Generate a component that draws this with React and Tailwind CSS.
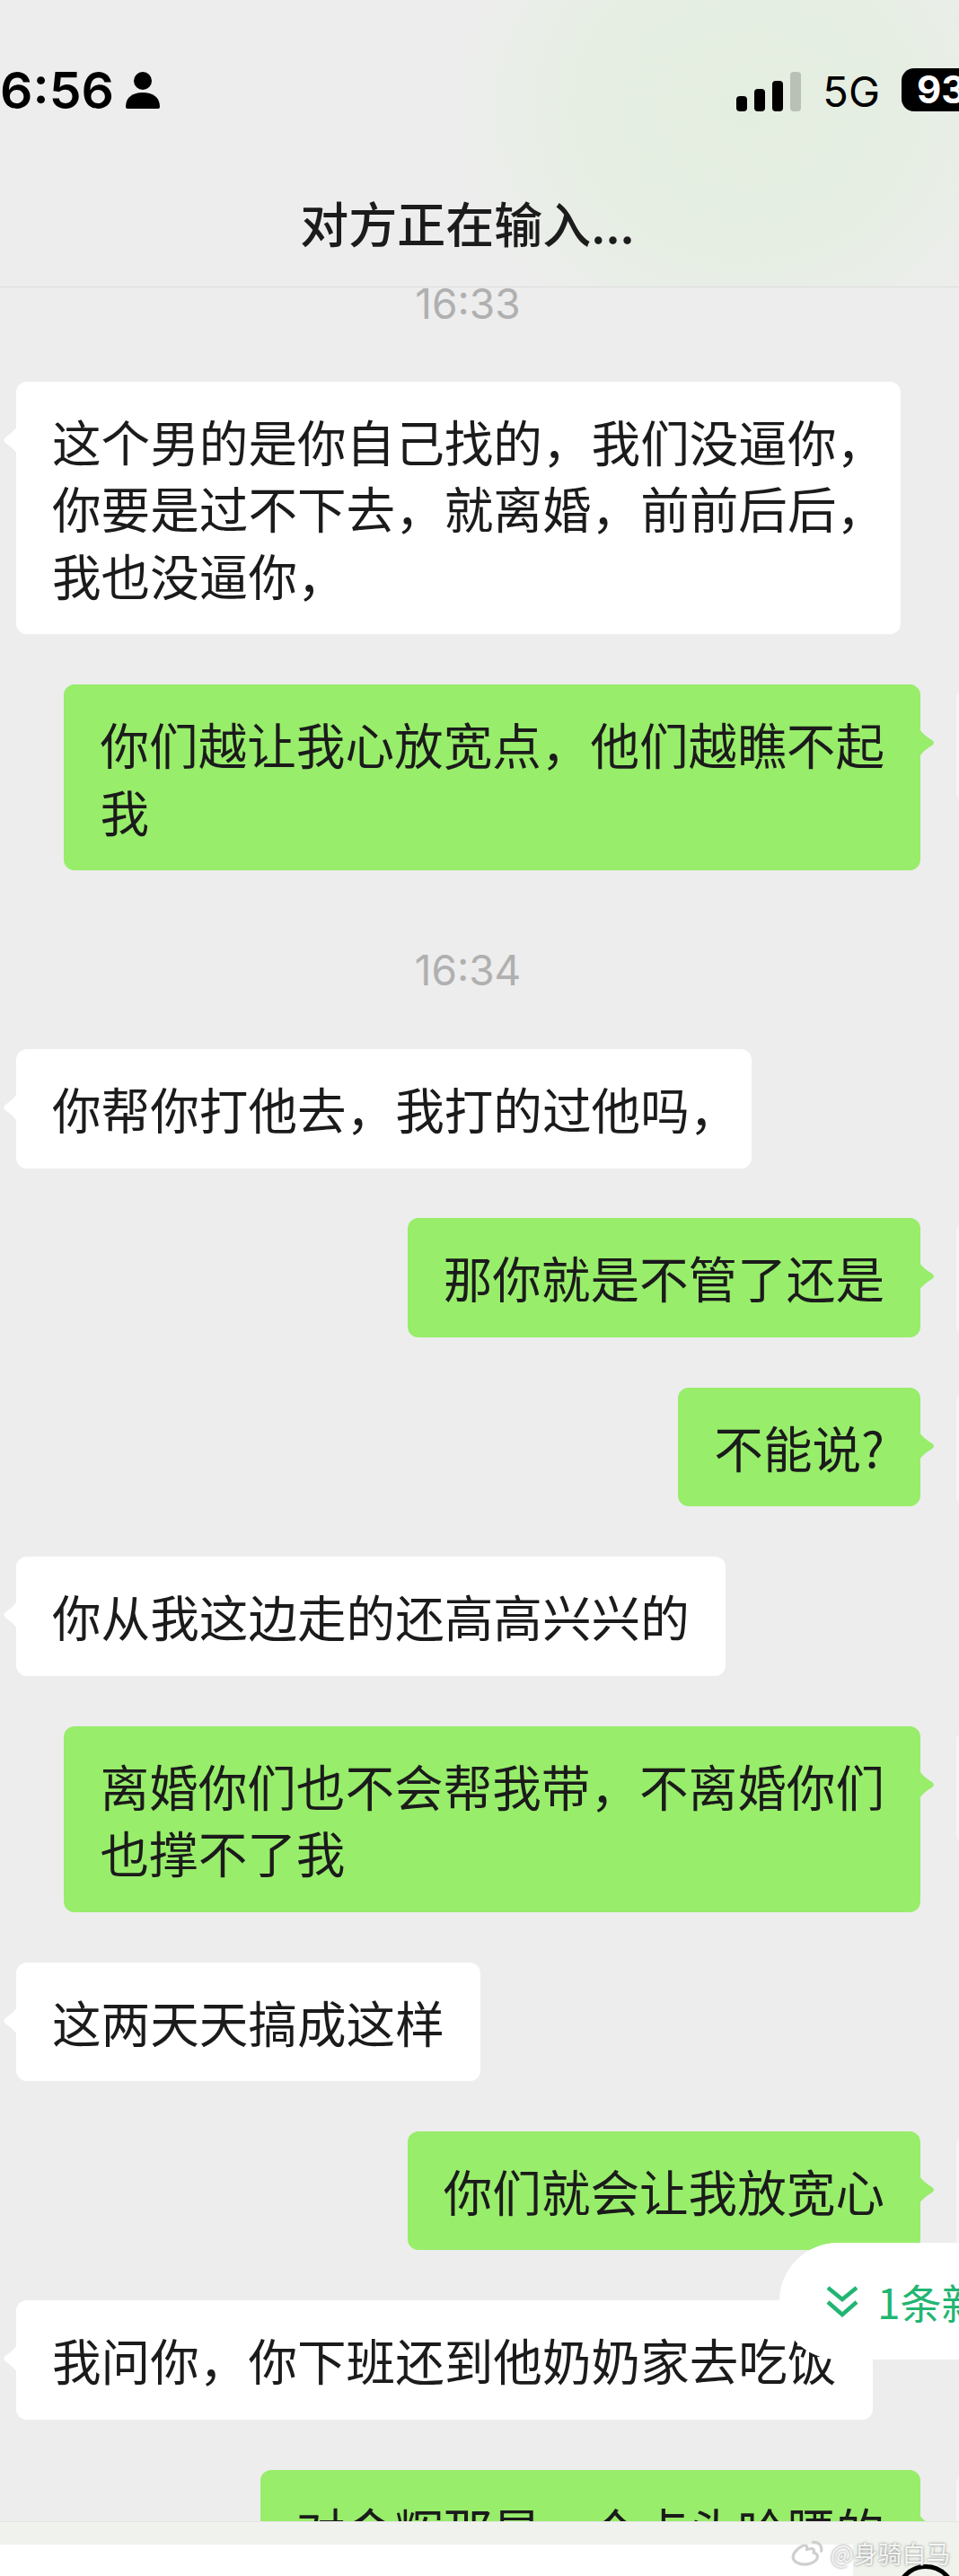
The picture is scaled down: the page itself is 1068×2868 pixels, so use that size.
import { RiWeiboLine } from "react-icons/ri";

const CN = "font-['Noto_Sans_CJK_SC','Noto_Sans',sans-serif]";

function Tail({ side }) {
  if (side === "right") {
    return (
      <svg className="absolute left-full top-[50px] -ml-px" width="18" height="30" viewBox="0 0 18 30">
        <path d="M0 0 C3 4 7 8 14 12 Q18 15 14 18 C7 22 3 26 0 30 Z" fill="#98ed6b" />
      </svg>
    );
  }
  return (
    <svg className="absolute right-full top-[50px] -mr-px" width="16" height="30" viewBox="0 0 16 30">
      <path d="M16 0 C13 4 9 8 3 12 Q0 15 3 18 C9 22 13 26 16 30 Z" fill="#ffffff" />
    </svg>
  );
}

function Bubble({ side, lines, width }) {
  const isMe = side === "right";
  return (
    <div
      className={
        isMe
          ? "relative self-end mr-[43px] shrink-0 rounded-[12px] bg-[#98ed6b] px-10 py-[29px]"
          : "relative self-start shrink-0 rounded-[12px] bg-white px-10 py-[29px]"
      }
      style={width ? { width } : undefined}
    >
      <Tail side={side} />
      {/* edge of the avatar, mostly off screen */}
      {isMe && <div className="absolute left-[calc(100%+40px)] top-2 h-[120px] w-[6px] rounded-l-[6px] bg-[#f5f5f5]" />}
      {lines.map((line) => (
        <p key={line} className="whitespace-nowrap text-[54.6px] leading-[74.5px] text-[#1b1b1b]">
          {line}
        </p>
      ))}
    </div>
  );
}

function TimeLabel({ children, className }) {
  return (
    <div className={`h-9 shrink-0 pr-[44px] text-center font-['Inter',sans-serif] text-[46px] leading-9 text-[#b0b0b0] ${className}`}>
      {children}
    </div>
  );
}

function StatusBar() {
  return (
    <div className="flex h-[48px] items-center justify-between">
      <div className="flex items-center">
        <span className="font-['Inter',sans-serif] text-[57px] font-semibold leading-none text-black">6:56</span>
        <svg className="ml-[12px]" width="40" height="42" viewBox="0 0 40 42">
          <circle cx="20" cy="11" r="10" fill="#000" />
          <path d="M1 40 C1 29 9 24 20 24 C31 24 39 29 39 40 Q39 42 37 42 L3 42 Q1 42 1 40 Z" fill="#000" />
        </svg>
      </div>
      <div className="flex items-end">
        <div className="flex h-[45px] items-end gap-2">
          <div className="h-[17px] w-3 rounded-[4px] bg-black" />
          <div className="h-[25px] w-3 rounded-[4px] bg-black" />
          <div className="h-[34px] w-3 rounded-[4px] bg-black" />
          <div className="h-[44px] w-3 rounded-[4px] bg-[#b9c1b6]" />
        </div>
        <span className="ml-[24px] font-['Inter',sans-serif] text-[47px] leading-[44px] text-black">5G</span>
        <div className="ml-[24px] flex h-[48px] w-[64px] items-center overflow-hidden rounded-l-[14px] bg-black pl-[17px]">
          <span className="font-['Inter',sans-serif] text-[42px] font-bold leading-none text-white">93</span>
        </div>
      </div>
    </div>
  );
}

export default function App() {
  return (
    <div lang="zh-CN" className={`relative flex h-[2868px] w-[1068px] flex-col overflow-hidden bg-[#ededed] ${CN}`}>
      <header className="h-[320px] shrink-0 border-b border-[#dcdcdc] bg-[radial-gradient(ellipse_340px_300px_at_830px_120px,#e4eee0_0%,#e6eee3_55%,#ededed_100%)] pt-[76px]">
        <StatusBar />
        <h1 className="mt-[87px] pr-[27px] text-center text-[54px] font-medium leading-[74px] text-[#1c1c1c]">对方正在输入...</h1>
      </header>

      <main className="relative flex min-h-0 flex-1 flex-col gap-[55.9px] overflow-hidden pl-[18px]">
        <TimeLabel className="mb-[13px]">16:33</TimeLabel>
        <Bubble
          side="left"
          width={985}
          lines={["这个男的是你自己找的，我们没逼你，", "你要是过不下去，就离婚，前前后后，", "我也没逼你，"]}
        />
        <Bubble side="right" lines={["你们越让我心放宽点，他们越瞧不起", "我"]} />
        <TimeLabel className="mt-[37px] mb-[14px]">16:34</TimeLabel>
        <Bubble side="left" width={819} lines={["你帮你打他去，我打的过他吗，"]} />
        <Bubble side="right" lines={["那你就是不管了还是"]} />
        <Bubble side="right" lines={["不能说?"]} />
        <Bubble side="left" lines={["你从我这边走的还高高兴兴的"]} />
        <Bubble side="right" lines={["离婚你们也不会帮我带，不离婚你们", "也撑不了我"]} />
        <Bubble side="left" lines={["这两天天搞成这样"]} />
        <Bubble side="right" lines={["你们就会让我放宽心"]} />
        <Bubble side="left" lines={["我问你，你下班还到他奶奶家去吃饭"]} />
        <Bubble side="right" lines={["对金辉那是一个点头哈腰的"]} />
      </main>

      <footer className="h-[61px] shrink-0">
        <div className="h-[26px] border-t border-[#e4e4e2] bg-[#f0f2ee]" />
        <div className="h-[35px] bg-white" />
      </footer>

      {/* new message pill */}
      <div className="absolute left-[868px] top-[2497px] flex h-[130px] w-[260px] items-center rounded-l-[65px] bg-white pl-[52px]">
        <svg className="shrink-0" width="36" height="36" viewBox="0 0 36 36" fill="none" stroke="#22b573" strokeWidth="4.5">
          <path d="M2 3 L18 16 L34 3" />
          <path d="M2 19 L18 33 L34 19" />
        </svg>
        <span className="ml-[21px] whitespace-nowrap text-[46px] leading-none text-[#22b573]">1条新消息</span>
      </div>

      {/* bottom right corner */}
      <div className="absolute left-[950px] top-[2833px] h-[35px] w-[118px] bg-[#eff3ec]" />
      <div className="absolute left-[997px] top-[2855px] h-[68px] w-[68px] rounded-full border-[5px] border-black" />

      {/* watermark */}
      <div className="absolute left-[880px] top-[2824px] flex items-center text-[#f6f6f6] [text-shadow:0_0_3px_#777777]">
        <RiWeiboLine className="h-[38px] w-[38px] text-[#cfcfcf]" />
        <span className="ml-[7px] whitespace-nowrap text-[27px] leading-[38px]">@身骑白马</span>
      </div>
    </div>
  );
}
